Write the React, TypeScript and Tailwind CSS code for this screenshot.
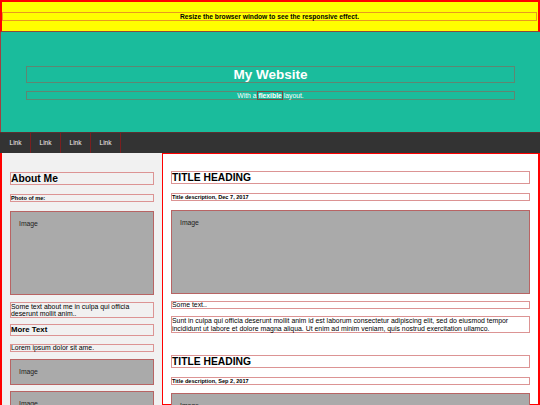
import type { FC, ReactNode } from 'react';

// thin red-ish frame that the reference draws round every box
const ol = 'ring-1 ring-[#dc9494]';

const FakeImg: FC<{ cls: string; children?: ReactNode }> = ({ cls, children }) => (
  <div className={`bg-[#aaaaaa] px-[8px] pt-[8px] text-[6.8px] leading-[7px] text-[#222] ring-1 ring-[#b86464] ${cls}`}>
    {children ?? 'Image'}
  </div>
);

export default function App() {
  return (
    <div className="w-[540px] h-[405px] overflow-hidden bg-white text-black font-['Liberation_Sans',Arial,sans-serif]">
      {/* notice bar */}
      <div className="h-[32px] bg-[#ffff00] border-2 border-b border-[#ff0000] border-b-[#8a4a3a] pl-px pr-[2px] pt-[11px]">
        <p className="h-[7px] text-center text-[6.7px] font-bold leading-[7px] ring-1 ring-[#e89a20]">
          Resize the browser window to see the responsive effect.
        </p>
      </div>

      {/* header */}
      <div className="h-[100px] bg-[#1abc9c] border-l border-[#a04040] px-[26px] pt-[35px] text-center text-white">
        <h1 className="h-[15px] text-[13.5px] font-bold leading-[15px] ring-1 ring-[#5f8672]">My Website</h1>
        <p className="mt-[10px] h-[7px] text-[6.8px] leading-[7px] ring-1 ring-[#5f8672]">
          With a <b className="ring-1 ring-[#7a4a40]">flexible</b> layout.
        </p>
      </div>

      {/* nav */}
      <div className="flex h-[21px] bg-[#333333] border-t border-[#5a3030] pl-px">
        {['Link', 'Link', 'Link', 'Link'].map((l, i) => (
          <a key={i} className="block w-[30px] text-center text-[6.5px] leading-[20px] text-[#f4f4f4] border-r border-[#7a1f1f]">
            {l}
          </a>
        ))}
      </div>

      {/* row */}
      <div className="flex h-[252px]">
        <div className="w-[162px] shrink-0 bg-[#f1f1f1] border-l-2 border-[#ff0000] pl-[9px] pr-[9px] pt-[20px]">
          <h2 className={`h-[11px] text-[10.3px] font-bold leading-[11px] ${ol}`}>About Me</h2>
          <h5 className={`mt-[11px] h-[6px] text-[5.6px] font-bold leading-[6px] ${ol}`}>Photo of me:</h5>
          <FakeImg cls="mt-[11px] h-[82px]" />
          <p className={`mt-[9px] h-[14px] text-[6.9px] leading-[7px] ${ol}`}>
            Some text about me in culpa qui officia deserunt mollit anim..
          </p>
          <h3 className={`mt-[8px] h-[10px] text-[7.8px] font-bold leading-[10px] ${ol}`}>More Text</h3>
          <p className={`mt-[10px] h-[6px] text-[6.9px] leading-[6px] ${ol}`}>Lorem ipsum dolor sit ame.</p>
          <FakeImg cls="mt-[9px] h-[24px]" />
          <FakeImg cls="mt-[8px] h-[24px]" />
        </div>

        <div className="flex-1 border border-r-2 border-[#ff0000] px-[9px] pt-[18px]">
          <h2 className={`h-[11px] text-[10.3px] font-bold leading-[11px] ${ol}`}>TITLE HEADING</h2>
          <h5 className={`mt-[11px] h-[6px] text-[5.6px] font-bold leading-[6px] ${ol}`}>Title description, Dec 7, 2017</h5>
          <FakeImg cls="mt-[11px] h-[82px]" />
          <p className={`mt-[9px] h-[6px] text-[6.9px] leading-[6px] ${ol}`}>Some text..</p>
          <p className={`mt-[9px] h-[15px] text-[6.9px] leading-[7.5px] ${ol}`}>
            Sunt in culpa qui officia deserunt mollit anim id est laborum consectetur adipiscing elit, sed do eiusmod tempor
            incididunt ut labore et dolore magna aliqua. Ut enim ad minim veniam, quis nostrud exercitation ullamco.
          </p>
          <h2 className={`mt-[24px] h-[11px] text-[10.3px] font-bold leading-[11px] ${ol}`}>TITLE HEADING</h2>
          <h5 className={`mt-[11px] h-[6px] text-[5.6px] font-bold leading-[6px] ${ol}`}>Title description, Sep 2, 2017</h5>
          <FakeImg cls="mt-[10px] h-[82px]" />
        </div>
      </div>
    </div>
  );
}
